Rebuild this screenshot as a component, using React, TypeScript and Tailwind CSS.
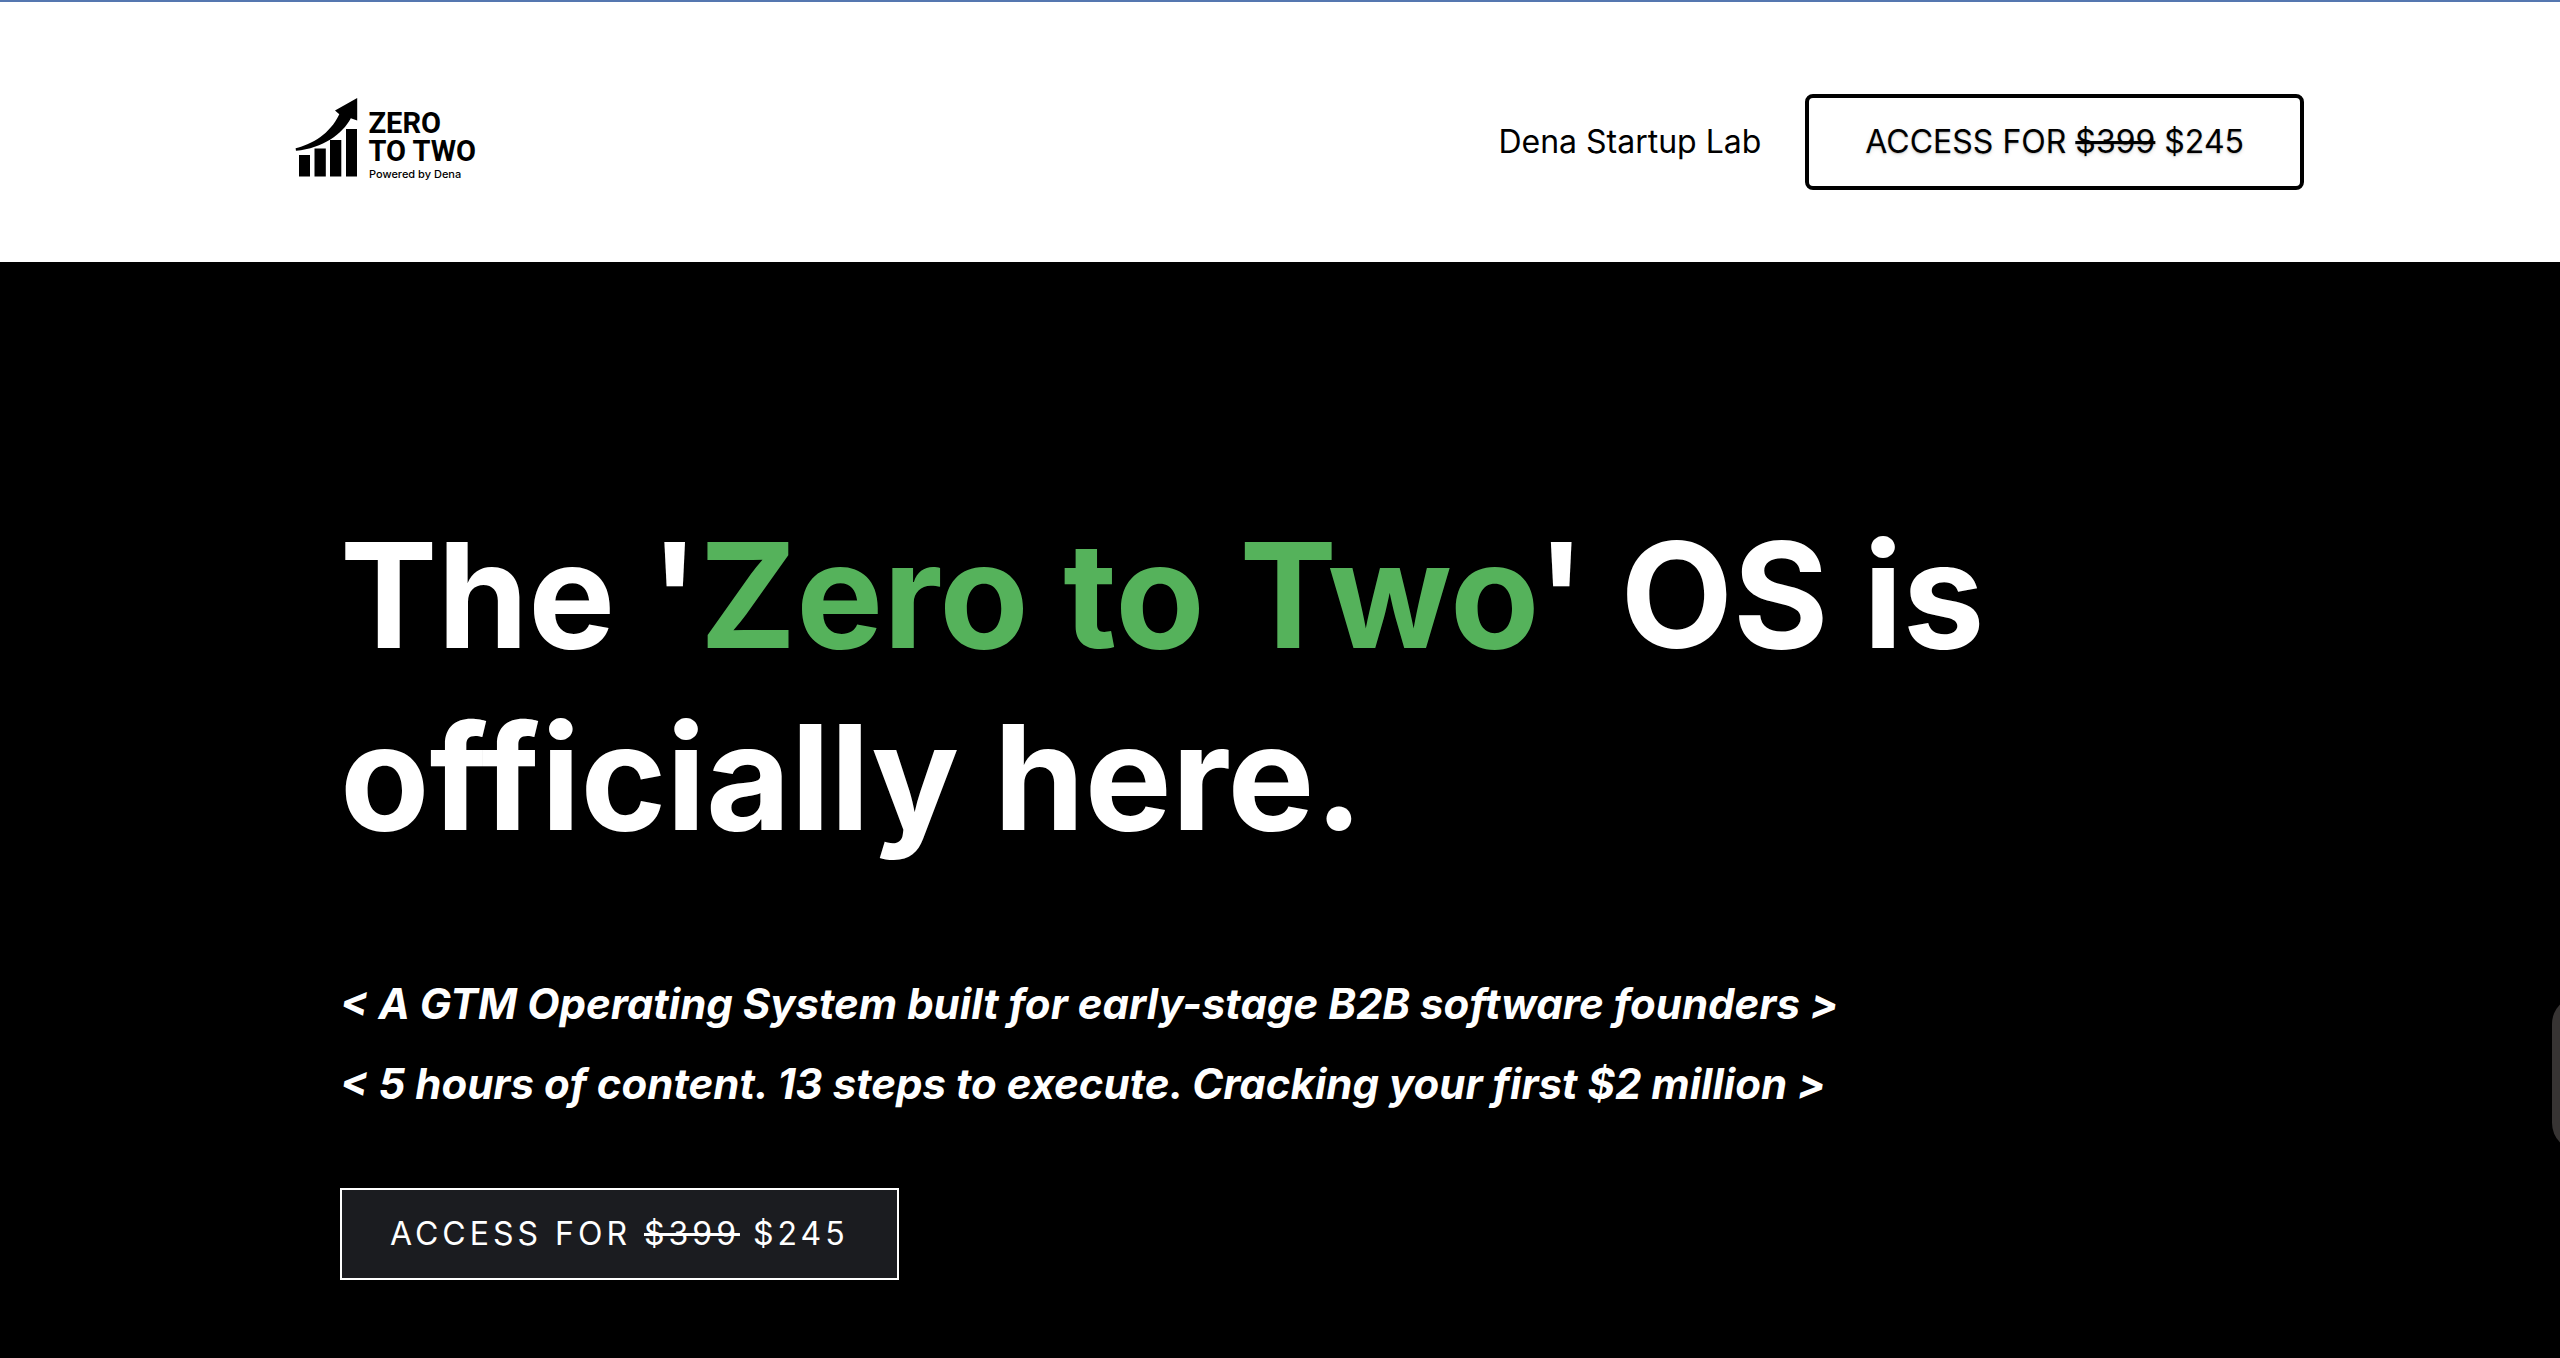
function Logo() {
  return (
    <svg viewBox="0 2 264 120" className="h-30 w-66" role="img" aria-label="Zero to Two, powered by Dena">
      {/* Bars */}
      <g fill="#000">
        <rect x="43" y="75" width="11" height="21.5" />
        <rect x="58.5" y="68.5" width="11.3" height="28" />
        <rect x="74" y="60" width="11.3" height="36.5" />
        <rect x="90" y="49" width="11" height="47.5" />
        {/* Growth arrow */}
        <path d="M39.6 68.2C56 64.5 74 54 83.3 34.3L79 30.5L101.2 18V40.5L94.8 38.2C86.5 54 67 68 40 70.8Z" />
      </g>
      <g fill="#000">
        <text x="112.5" y="52.7" fontFamily="Roboto, sans-serif" fontSize="29" fontWeight="700">ZERO</text>
        <text x="112.5" y="80.7" fontFamily="Roboto, sans-serif" fontSize="29" fontWeight="700">TO TWO</text>
        <text x="113" y="97.7" fontFamily="Inter, sans-serif" fontSize="11" fontWeight="500">Powered by Dena</text>
      </g>
    </svg>
  );
}

function Price() {
  return (
    <>
      ACCESS FOR <s className="decoration-3">$399</s> $245
    </>
  );
}

export default function App() {
  return (
    <div className="relative flex min-h-screen flex-col overflow-hidden bg-black font-['Inter','Liberation_Sans',sans-serif]">
      {/* Header */}
      <header className="border-t-2 border-[#5577b0] bg-white px-8 text-black">
        <div className="mx-auto flex h-65 max-w-[2048px] items-center justify-between pt-5">
          <a href="#">
            <Logo />
          </a>
          <nav className="flex items-center gap-11">
            <a href="#lab" className="text-[32px]">
              Dena Startup Lab
            </a>
            <button className="h-24 rounded-lg border-4 border-black px-14 text-[32px] text-shadow-md">
              <Price />
            </button>
          </nav>
        </div>
      </header>

      {/* Hero */}
      <main className="flex-1 px-8 pt-[242px] pb-16 text-white">
        <div className="mx-auto max-w-[1880px]">
          <h1 className="text-[146px] leading-[182px] font-bold">
            The '<span className="text-[#55b25b]">Zero to Two</span>' OS is officially here.
          </h1>
          <div className="mt-24 text-[42px] leading-20 font-bold italic">
            <p>&lt; A GTM Operating System built for early-stage B2B software founders &gt;</p>
            <p>&lt; 5 hours of content. 13 steps to execute. Cracking your first $2 million &gt;</p>
          </div>
          <button className="mt-16 h-23 border-2 border-white bg-[#1b1c20] px-12 text-[32px] tracking-[4px]">
            <Price />
          </button>
        </div>
      </main>

      {/* Side tab, mostly off screen */}
      <div className="absolute top-[996px] -right-8 h-[155px] w-10 rounded-l-[28px] bg-[#373433]" />
    </div>
  );
}
